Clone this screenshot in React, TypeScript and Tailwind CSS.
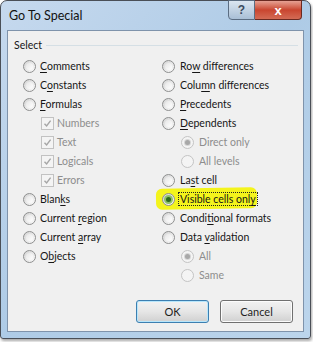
import React from 'react';

type Item = { pre: string; key: string; post: string };

function Label({ item, muted }: { item: Item; muted?: boolean }) {
  return (
    <span className={muted ? 'text-[#8d8d8d]' : 'text-[#161616]'}>
      {item.pre}
      {item.key && <span className="underline underline-offset-[2px]">{item.key}</span>}
      {item.post}
    </span>
  );
}

function Radio({ checked, disabled, green }: { checked?: boolean; disabled?: boolean; green?: boolean }) {
  return (
    <span
      className={`relative flex h-[13px] w-[13px] shrink-0 items-center justify-center rounded-full border ${
        disabled ? 'border-[#c4c4c4] bg-[#f4f4f4]' : 'border-[#8e8f8f] bg-gradient-to-br from-[#d4d4d4] to-[#fbfbfb]'
      }`}
    >
      {!disabled && <span className="h-[7px] w-[7px] rounded-full bg-gradient-to-br from-[#e6e6e6] to-[#ffffff]" />}
      {checked && (
        <span
          className={`absolute h-[5px] w-[5px] rounded-full ${
            green ? 'bg-[#2d6a1c] ring-2 ring-[#8fc06a]' : 'bg-[#a8a8a8] ring-1 ring-[#d6d6d6]'
          }`}
        />
      )}
    </span>
  );
}

function Check() {
  return (
    <span className="flex h-[13px] w-[13px] shrink-0 items-center justify-center border border-[#c2c2c2] bg-[#f4f4f4]">
      <svg width="9" height="9" viewBox="0 0 9 9">
        <path d="M1.5 4.8 L3.6 7 L7.6 1.6" fill="none" stroke="#a6a6a6" strokeWidth="1.4" />
      </svg>
    </span>
  );
}

const left: { item: Item; kind: 'radio' | 'check' }[] = [
  { item: { pre: '', key: 'C', post: 'omments' }, kind: 'radio' },
  { item: { pre: 'C', key: 'o', post: 'nstants' }, kind: 'radio' },
  { item: { pre: '', key: 'F', post: 'ormulas' }, kind: 'radio' },
  { item: { pre: 'Numbers', key: '', post: '' }, kind: 'check' },
  { item: { pre: 'Text', key: '', post: '' }, kind: 'check' },
  { item: { pre: 'Logicals', key: '', post: '' }, kind: 'check' },
  { item: { pre: 'Errors', key: '', post: '' }, kind: 'check' },
  { item: { pre: 'Blan', key: 'k', post: 's' }, kind: 'radio' },
  { item: { pre: 'Current ', key: 'r', post: 'egion' }, kind: 'radio' },
  { item: { pre: 'Current ', key: 'a', post: 'rray' }, kind: 'radio' },
  { item: { pre: 'O', key: 'b', post: 'jects' }, kind: 'radio' },
];

const right: { item: Item; sub?: boolean; checked?: boolean; focus?: boolean }[] = [
  { item: { pre: 'Ro', key: 'w', post: ' differences' } },
  { item: { pre: 'Colu', key: 'm', post: 'n differences' } },
  { item: { pre: '', key: 'P', post: 'recedents' } },
  { item: { pre: '', key: 'D', post: 'ependents' } },
  { item: { pre: 'Direct only', key: '', post: '' }, sub: true, checked: true },
  { item: { pre: 'All levels', key: '', post: '' }, sub: true },
  { item: { pre: 'La', key: 's', post: 't cell' } },
  { item: { pre: 'Visible cells onl', key: 'y', post: '' }, checked: true, focus: true },
  { item: { pre: 'Condi', key: 't', post: 'ional formats' } },
  { item: { pre: 'Data ', key: 'v', post: 'alidation' } },
  { item: { pre: 'All', key: '', post: '' }, sub: true, checked: true },
  { item: { pre: 'Same', key: '', post: '' }, sub: true },
];

export default function App() {
  return (
    <div className="h-[342px] w-[313px] bg-white font-['Lato',sans-serif] text-[10.5px] leading-none">
      <div className="relative flex h-[339px] w-[311px] flex-col rounded-t-[7px] rounded-b-[3px] border border-[#4a4f57] bg-gradient-to-br from-[#c6d9ee] via-[#aecbe6] to-[#bcd5ec] px-[6px] pb-[6px] shadow-[1px_2px_3px_rgba(0,0,0,0.35)]">
        {/* title bar */}
        <div className="flex h-[29px] items-center pl-[2px] pt-[2px]">
          <span className="text-[12.5px] text-[#111]">Go To Special</span>
        </div>
        <div className="absolute right-[8px] top-[-1px] flex h-[20px]">
          <div className="flex w-[27px] items-center justify-center rounded-bl-[4px] border border-[#5b6d82] bg-gradient-to-b from-[#dbe6f1] to-[#a9bfd6] font-['Liberation_Sans',sans-serif] text-[12px] font-bold text-[#3b4b5e]">
            ?
          </div>
          <div className="flex w-[47px] items-center justify-center rounded-br-[4px] border border-l-0 border-[#6b2a21] bg-gradient-to-b from-[#e5a193] via-[#c9452f] to-[#d36b55] font-['Liberation_Sans',sans-serif] text-[13px] font-bold text-white">
            x
          </div>
        </div>

        {/* client area */}
        <div className="flex flex-1 flex-col border border-[#7f93ab] bg-[#f0f0f0] px-[5px] pt-[9px]">
          <div className="flex items-center gap-[4px] pl-[1px]">
            <span className="text-[#161616]">Select</span>
            <span className="h-px flex-1 bg-[#d5dfe5]" />
          </div>

          <div className="mt-[9px] flex">
            <div className="flex w-[140px] flex-col gap-[6px] pl-[10px]">
              {left.map((r, i) =>
                r.kind === 'radio' ? (
                  <div key={i} className="flex h-[13px] items-center gap-[4px]">
                    <Radio />
                    <Label item={r.item} />
                  </div>
                ) : (
                  <div key={i} className="flex h-[13px] items-center gap-[3px] pl-[18px]">
                    <Check />
                    <Label item={r.item} muted />
                  </div>
                ),
              )}
            </div>
            <div className="flex flex-1 flex-col gap-[6px] pl-[9px]">
              {right.map((r, i) => (
                <div key={i} className={`relative flex h-[13px] items-center gap-[5px] ${r.sub ? 'pl-[19px]' : ''}`}>
                  {r.focus && (
                    <span className="absolute left-[-6px] top-[-5px] h-[21px] w-[101px] -rotate-1 rounded-[6px] bg-[#f4f41c]" />
                  )}
                  <span className="relative">
                    <Radio checked={r.checked} disabled={r.sub} green={r.focus} />
                  </span>
                  <span className={`relative ${r.focus ? 'outline outline-1 outline-dotted outline-[#222] outline-offset-[1px]' : ''}`}>
                    <Label item={r.item} muted={r.sub} />
                  </span>
                </div>
              ))}
            </div>
          </div>

          <div className="mt-auto mb-[8px] flex justify-end gap-[11px] pr-[5px]">
            <button className="h-[23px] w-[73px] rounded-[3px] border border-[#3c7fb1] bg-gradient-to-b from-[#f2f2f2] via-[#e6e6e6] to-[#d0d0d0] text-[11px] text-[#1e1e1e] shadow-[inset_0_0_0_1px_#b8e6fb]">
              OK
            </button>
            <button className="h-[23px] w-[73px] rounded-[3px] border border-[#707070] bg-gradient-to-b from-[#f2f2f2] via-[#e6e6e6] to-[#d0d0d0] text-[11px] text-[#1e1e1e] shadow-[inset_0_0_0_1px_#fcfcfc]">
              Cancel
            </button>
          </div>
        </div>
      </div>
    </div>
  );
}
